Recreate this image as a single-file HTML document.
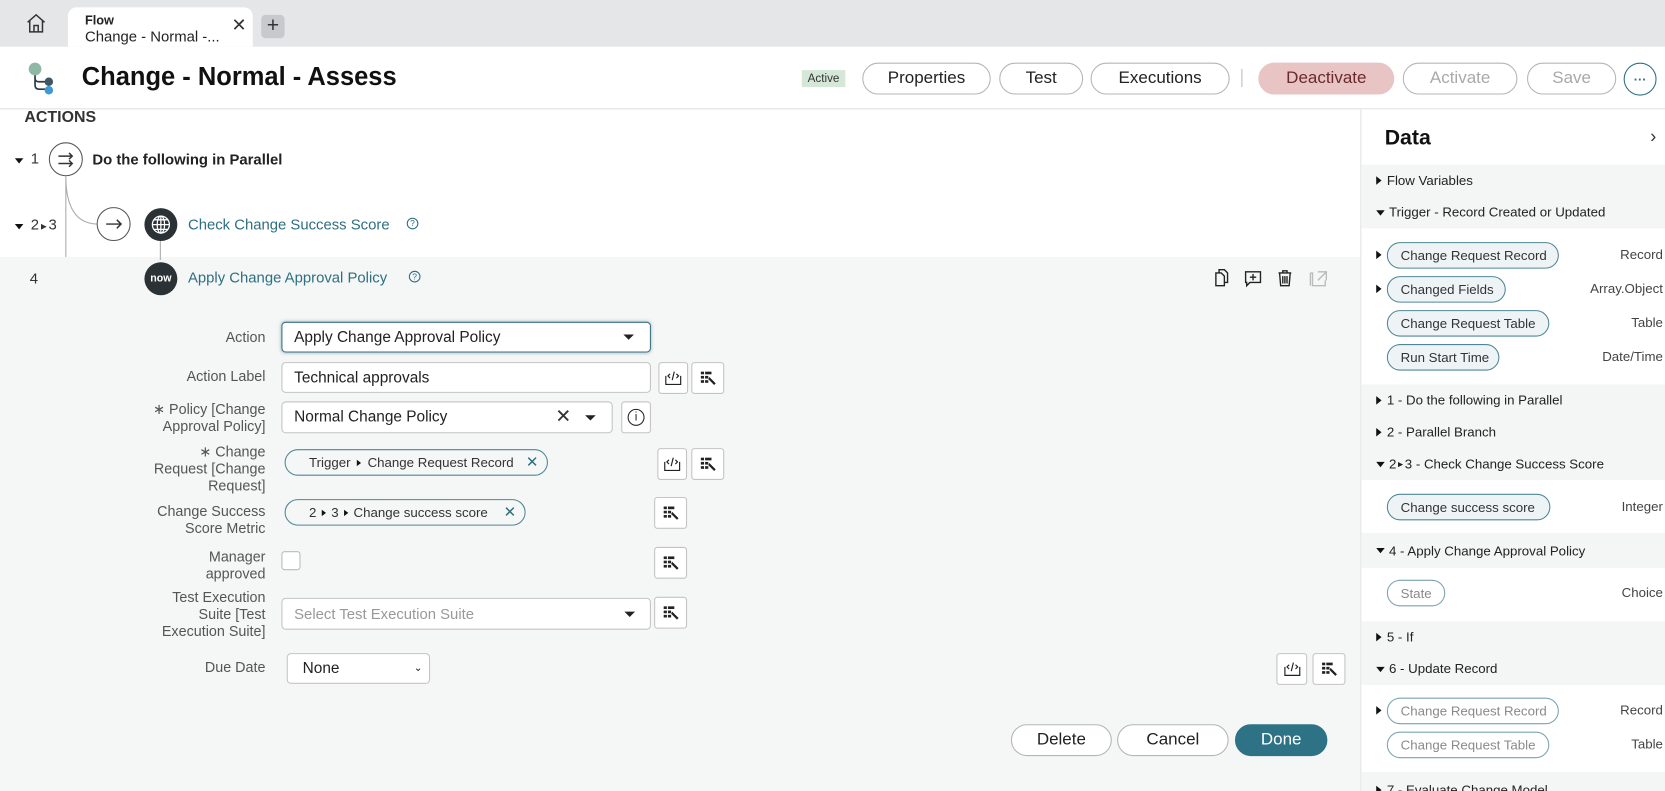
<!DOCTYPE html>
<html><head><meta charset="utf-8">
<style>
*{box-sizing:border-box;margin:0;padding:0}
html,body{width:1665px;height:791px;overflow:hidden;background:#fff;font-family:"Liberation Sans",sans-serif;color:#222}
#w{position:absolute;left:0;top:0;width:1568px;height:745px;transform:scale(1.0619);transform-origin:0 0;overflow:hidden}
.a{position:absolute}
.btn{position:absolute;border:1px solid #b5b5b5;border-radius:16px;background:#fff;font-size:16px;color:#222;display:flex;align-items:center;justify-content:center}
.lbl{position:absolute;right:1318px;text-align:right;font-size:13.5px;color:#555;line-height:16px}
.inp{position:absolute;background:#fff;border:1px solid #c4c4c4;border-radius:4px;font-size:14.5px;color:#222;display:flex;align-items:center;padding-left:11px}
.sq{position:absolute;width:31px;height:30px;background:#fff;border:1px solid #c4c4c4;border-radius:3px;display:flex;align-items:center;justify-content:center}
.pill{position:absolute;border:1px solid #4f8796;border-radius:13px;background:#eef4f6;font-size:12.5px;color:#333;display:flex;align-items:center;padding-left:12px;height:25px}
.pill.l{background:#fff;color:#8a8a8a;border-color:#7aa3ae}
.typ{position:absolute;right:2px;font-size:12.5px;color:#444}
.sh{position:absolute;left:0;width:287px;height:30px;background:#f4f5f5;font-size:12.5px;color:#222;display:flex;align-items:center;padding-left:14px}
.tri{display:inline-block;width:0;height:0;border-top:4px solid transparent;border-bottom:4px solid transparent;border-left:5px solid #111;margin-right:5px}
.trd{display:inline-block;width:0;height:0;border-left:4px solid transparent;border-right:4px solid transparent;border-top:5px solid #111;margin-right:4px}
.caret{position:absolute;width:0;height:0;border-left:5px solid transparent;border-right:5px solid transparent;border-top:5px solid #222}
</style></head><body><div id="w">

<!-- tab bar -->
<div class="a" style="left:0;top:0;width:1568px;height:44px;background:#e5e6e8"></div>
<svg class="a" style="left:24px;top:12px" width="20" height="20" viewBox="0 0 20 20" fill="none" stroke="#333" stroke-width="1.4"><path d="M2 9 L10 2 L18 9 M4 7.5 V18 H16 V7.5 M8 18 V12 H12 V18"/></svg>
<div class="a" style="left:64px;top:7px;width:174px;height:37px;background:#fff;border-radius:8px 8px 0 0"></div>
<div class="a" style="left:80px;top:12px;font-size:12px;font-weight:bold">Flow</div>
<div class="a" style="left:80px;top:26px;font-size:14px">Change - Normal -...</div>
<div class="a" style="left:218px;top:14px;font-size:17px;color:#333">✕</div>
<div class="a" style="left:246px;top:14px;width:22px;height:22px;background:#c7cacd;border-radius:4px;font-size:20px;line-height:21px;text-align:center;color:#333">+</div>

<!-- header -->
<div class="a" style="left:0;top:102px;width:1568px;height:1px;background:#e0e0e0"></div>
<svg class="a" style="left:25px;top:58px" width="28" height="32" viewBox="0 0 28 32"><path d="M8 8 V22 Q8 26 12 26 H20 M8 16 Q8 19 12 19 H20" fill="none" stroke="#2c3a44" stroke-width="1.6"/><circle cx="8" cy="7" r="6" fill="#8fb8a4"/><circle cx="21" cy="19" r="4" fill="#3f5663"/><circle cx="21" cy="27" r="4" fill="#3c9ad8"/></svg>
<div class="a" style="left:77px;top:59px;font-size:24px;font-weight:bold;color:#111">Change - Normal - Assess</div>
<div class="a" style="left:755px;top:66px;width:41px;height:16px;background:#d5e8d7;font-size:11px;color:#333;text-align:center;line-height:16px">Active</div>
<div class="btn" style="left:812px;top:59px;width:121px;height:30px">Properties</div>
<div class="btn" style="left:941px;top:59px;width:79px;height:30px">Test</div>
<div class="btn" style="left:1027px;top:59px;width:131px;height:30px">Executions</div>
<div class="a" style="left:1169px;top:65px;width:1px;height:17px;background:#bbb"></div>
<div class="btn" style="left:1185px;top:59px;width:128px;height:30px;background:#e8c4c5;border-color:#e8c4c5;color:#6a2a2a">Deactivate</div>
<div class="btn" style="left:1321px;top:59px;width:108px;height:30px;color:#a9a9a9">Activate</div>
<div class="btn" style="left:1438px;top:59px;width:84px;height:30px;color:#a9a9a9">Save</div>
<div class="btn" style="left:1529px;top:59px;width:31px;height:31px;border-color:#2e6f80;color:#2e6f80;font-size:12px;font-weight:bold">···</div>

<!-- actions -->
<div class="a" style="left:23px;top:102px;font-size:15px;font-weight:bold;color:#333">ACTIONS</div>
<div class="a" style="left:0;top:242px;width:1281px;height:503px;background:#f5f6f6"></div>
<div class="a" style="left:14px;top:141px;font-size:14px;color:#333"><span class="trd" style="margin-right:7px"></span>1</div>
<svg class="a" style="left:0;top:120px" width="200" height="125" fill="none" stroke="#aaa" stroke-width="1"><path d="M62 46 V122 M62 46 Q62 90 91 91"/><path d="M151 106 V125"/></svg>
<div class="a" style="left:46px;top:134px;width:32px;height:32px;border:1px solid #555;border-radius:50%;background:#fff"></div>
<svg class="a" style="left:52px;top:140px" width="20" height="20" fill="none" stroke="#333" stroke-width="1.4"><path d="M3 7 H16 M13 4 L16 7 L13 10 M3 14 H16 M13 11 L16 14 L13 17"/></svg>
<div class="a" style="left:87px;top:142px;font-size:14px;font-weight:bold;color:#222">Do the following in Parallel</div>

<div class="a" style="left:14px;top:203px;font-size:14px;color:#333"><span class="trd" style="margin-right:7px"></span>2<span style="font-size:9px">►</span>3</div>
<div class="a" style="left:91px;top:195px;width:32px;height:32px;border:1px solid #555;border-radius:50%;background:#fff"></div>
<svg class="a" style="left:97px;top:201px" width="20" height="20" fill="none" stroke="#333" stroke-width="1.4"><path d="M3 10 H17 M13 6 L17 10 L13 14"/></svg>
<div class="a" style="left:136px;top:196px;width:31px;height:31px;border-radius:50%;background:#2a3235"></div>
<svg class="a" style="left:142px;top:202px" width="19" height="19" fill="none" stroke="#fff" stroke-width="1.2"><circle cx="9.5" cy="9.5" r="8"/><ellipse cx="9.5" cy="9.5" rx="3.5" ry="8"/><path d="M1.5 9.5 H17.5 M3 5 H16 M3 14 H16 M9.5 1.5 V17.5"/></svg>
<div class="a" style="left:177px;top:203px;font-size:14px;color:#2e6f80">Check Change Success Score</div>
<div class="a" style="left:383px;top:205px;width:11px;height:11px;border:1px solid #2e6f80;border-radius:50%;font-size:8px;color:#2e6f80;text-align:center;line-height:10px">?</div>

<div class="a" style="left:28px;top:254px;font-size:14px;color:#333">4</div>
<div class="a" style="left:136px;top:247px;width:31px;height:31px;border-radius:50%;background:#2a3235;color:#fff;font-size:10px;font-weight:bold;text-align:center;line-height:31px">now</div>
<div class="a" style="left:177px;top:253px;font-size:14px;color:#2e6f80">Apply Change Approval Policy</div>
<div class="a" style="left:385px;top:255px;width:11px;height:11px;border:1px solid #2e6f80;border-radius:50%;font-size:8px;color:#2e6f80;text-align:center;line-height:10px">?</div>
<svg class="a" style="left:1141px;top:252px" width="110" height="20" fill="none" stroke="#222" stroke-width="1.3"><path d="M4 5 H9 L12 8 V17 H4 Z M7 5 V2 H12 L15 5 V14 H12"/><path d="M32 4 H46 V14 H36 L33 17 V14 H32 Z M39 6 V12 M36 9 H42"/><path d="M63 5 H75 M67 5 V3 H71 V5 M64 5 L65 17 H73 L74 5 M67 8 V15 M69 8 V15 M71 8 V15"/><path stroke="#bbb" d="M93 5 H95 V17 H107 V12 M93 5 V17 M100 4 H108 V12 M108 4 L100 12"/></svg>

<!-- form -->
<div class="lbl" style="top:310px">Action</div>
<div class="inp" style="left:265px;top:303px;width:348px;height:29px;border-color:#3c7384;box-shadow:0 0 3px rgba(60,115,132,.5)">Apply Change Approval Policy</div>
<div class="caret" style="left:587px;top:315px"></div>

<div class="lbl" style="top:347px">Action Label</div>
<div class="inp" style="left:265px;top:341px;width:348px;height:29px">Technical approvals</div>
<div class="sq" style="left:620px;top:341px;width:28px;height:30px"><svg width="18" height="16" fill="none" stroke="#222" stroke-width="1.1"><path d="M2 6 V14 H16 V6 M6 8 L4 6 L6 4 M12 8 L14 6 L12 4 M10 2 L8 10"/></svg></div>
<div class="sq" style="left:651px;top:341px"><svg width="18" height="16" fill="#222"><rect x="2" y="2" width="3" height="2.5"/><rect x="6" y="2" width="6" height="2.5"/><rect x="2" y="6" width="3" height="2.5"/><rect x="6" y="6" width="3" height="2.5"/><rect x="2" y="10" width="3" height="2.5"/><rect x="6" y="10" width="3" height="2.5"/><path d="M10 7 L16 13 L14.5 14.5 L9 9 Z"/></svg></div>

<div class="lbl" style="top:378px">∗ Policy [Change<br>Approval Policy]</div>
<div class="inp" style="left:265px;top:378px;width:312px;height:30px">Normal Change Policy</div>
<div class="a" style="left:523px;top:382px;font-size:18px;color:#333">✕</div>
<div class="caret" style="left:551px;top:391px"></div>
<div class="sq" style="left:585px;top:378px;width:28px;height:30px"><div style="width:16px;height:16px;border:1.3px solid #222;border-radius:50%;font-size:11px;text-align:center;line-height:14px">i</div></div>

<div class="lbl" style="top:418px">∗ Change<br>Request [Change<br>Request]</div>
<div class="pill" style="left:268px;top:423px;width:248px;padding-left:22px;background:#f5f6f6">Trigger <span class="tri" style="margin:0 6px;border-top-width:3px;border-bottom-width:3px;border-left-width:4px"></span>Change Request Record<span style="position:absolute;right:8px;color:#2e6f80;font-size:14px">✕</span></div>
<div class="sq" style="left:619px;top:422px;width:28px;height:30px"><svg width="18" height="16" fill="none" stroke="#222" stroke-width="1.1"><path d="M2 6 V14 H16 V6 M6 8 L4 6 L6 4 M12 8 L14 6 L12 4 M10 2 L8 10"/></svg></div>
<div class="sq" style="left:651px;top:422px"><svg width="18" height="16" fill="#222"><rect x="2" y="2" width="3" height="2.5"/><rect x="6" y="2" width="6" height="2.5"/><rect x="2" y="6" width="3" height="2.5"/><rect x="6" y="6" width="3" height="2.5"/><rect x="2" y="10" width="3" height="2.5"/><rect x="6" y="10" width="3" height="2.5"/><path d="M10 7 L16 13 L14.5 14.5 L9 9 Z"/></svg></div>

<div class="lbl" style="top:474px">Change Success<br>Score Metric</div>
<div class="pill" style="left:268px;top:470px;width:227px;padding-left:22px;background:#f5f6f6">2 <span class="tri" style="margin:0 5px;border-top-width:3px;border-bottom-width:3px;border-left-width:4px"></span>3 <span class="tri" style="margin:0 5px;border-top-width:3px;border-bottom-width:3px;border-left-width:4px"></span>Change success score<span style="position:absolute;right:8px;color:#2e6f80;font-size:14px">✕</span></div>
<div class="sq" style="left:616px;top:468px"><svg width="18" height="16" fill="#222"><rect x="2" y="2" width="3" height="2.5"/><rect x="6" y="2" width="6" height="2.5"/><rect x="2" y="6" width="3" height="2.5"/><rect x="6" y="6" width="3" height="2.5"/><rect x="2" y="10" width="3" height="2.5"/><rect x="6" y="10" width="3" height="2.5"/><path d="M10 7 L16 13 L14.5 14.5 L9 9 Z"/></svg></div>

<div class="lbl" style="top:517px">Manager<br>approved</div>
<div class="a" style="left:265px;top:519px;width:18px;height:18px;background:#fff;border:1px solid #bbb;border-radius:3px"></div>
<div class="sq" style="left:616px;top:515px"><svg width="18" height="16" fill="#222"><rect x="2" y="2" width="3" height="2.5"/><rect x="6" y="2" width="6" height="2.5"/><rect x="2" y="6" width="3" height="2.5"/><rect x="6" y="6" width="3" height="2.5"/><rect x="2" y="10" width="3" height="2.5"/><rect x="6" y="10" width="3" height="2.5"/><path d="M10 7 L16 13 L14.5 14.5 L9 9 Z"/></svg></div>

<div class="lbl" style="top:555px">Test Execution<br>Suite [Test<br>Execution Suite]</div>
<div class="inp" style="left:265px;top:563px;width:348px;height:30px;color:#999;font-size:14px">Select Test Execution Suite</div>
<div class="caret" style="left:588px;top:576px"></div>
<div class="sq" style="left:616px;top:562px"><svg width="18" height="16" fill="#222"><rect x="2" y="2" width="3" height="2.5"/><rect x="6" y="2" width="6" height="2.5"/><rect x="2" y="6" width="3" height="2.5"/><rect x="6" y="6" width="3" height="2.5"/><rect x="2" y="10" width="3" height="2.5"/><rect x="6" y="10" width="3" height="2.5"/><path d="M10 7 L16 13 L14.5 14.5 L9 9 Z"/></svg></div>

<div class="lbl" style="top:621px">Due Date</div>
<div class="inp" style="left:270px;top:615px;width:135px;height:29px;padding-left:14px">None<span style="position:absolute;right:6px;font-size:10px">&#8964;</span></div>
<div class="sq" style="left:1202px;top:615px;width:29px;height:30px"><svg width="18" height="16" fill="none" stroke="#222" stroke-width="1.1"><path d="M2 6 V14 H16 V6 M6 8 L4 6 L6 4 M12 8 L14 6 L12 4 M10 2 L8 10"/></svg></div>
<div class="sq" style="left:1236px;top:615px"><svg width="18" height="16" fill="#222"><rect x="2" y="2" width="3" height="2.5"/><rect x="6" y="2" width="6" height="2.5"/><rect x="2" y="6" width="3" height="2.5"/><rect x="6" y="6" width="3" height="2.5"/><rect x="2" y="10" width="3" height="2.5"/><rect x="6" y="10" width="3" height="2.5"/><path d="M10 7 L16 13 L14.5 14.5 L9 9 Z"/></svg></div>

<div class="btn" style="left:952px;top:682px;width:95px;height:30px">Delete</div>
<div class="btn" style="left:1052px;top:682px;width:105px;height:30px">Cancel</div>
<div class="btn" style="left:1163px;top:682px;width:87px;height:30px;background:#2e7286;border-color:#2e7286;color:#fff">Done</div>

<!-- right panel -->
<div class="a" style="left:1281px;top:103px;width:287px;height:642px;background:#fff;border-left:1px solid #e3e3e3">
  <div class="a" style="left:22px;top:16px;font-size:20px;font-weight:bold;color:#111">Data</div>
  <div class="a" style="left:272px;top:16px;font-size:17px;color:#333">›</div>
  <div class="sh" style="top:52px"><span class="tri"></span>Flow Variables</div>
  <div class="sh" style="top:82px"><span class="trd"></span>Trigger - Record Created or Updated</div>
  <span class="tri a" style="left:14px;top:133px"></span>
  <div class="pill" style="left:24px;top:125px;width:162px">Change Request Record</div><div class="typ" style="top:130px">Record</div>
  <span class="tri a" style="left:14px;top:165px"></span>
  <div class="pill" style="left:24px;top:157px;width:112px">Changed Fields</div><div class="typ" style="top:162px">Array.Object</div>
  <div class="pill" style="left:24px;top:189px;width:153px">Change Request Table</div><div class="typ" style="top:194px">Table</div>
  <div class="pill" style="left:24px;top:221px;width:106px">Run Start Time</div><div class="typ" style="top:226px">Date/Time</div>
  <div class="sh" style="top:259px"><span class="tri"></span>1 - Do the following in Parallel</div>
  <div class="sh" style="top:289px"><span class="tri"></span>2 - Parallel Branch</div>
  <div class="sh" style="top:319px"><span class="trd"></span>2<span style="font-size:8px">►</span>3 - Check Change Success Score</div>
  <div class="pill" style="left:24px;top:362px;width:154px">Change success score</div><div class="typ" style="top:367px">Integer</div>
  <div class="sh" style="top:399px;height:33px"><span class="trd"></span>4 - Apply Change Approval Policy</div>
  <div class="pill l" style="left:24px;top:443px;width:55px">State</div><div class="typ" style="top:448px">Choice</div>
  <div class="sh" style="top:482px"><span class="tri"></span>5 - If</div>
  <div class="sh" style="top:512px;height:30px"><span class="trd"></span>6 - Update Record</div>
  <span class="tri a" style="left:14px;top:562px"></span>
  <div class="pill l" style="left:24px;top:554px;width:162px">Change Request Record</div><div class="typ" style="top:559px">Record</div>
  <div class="pill l" style="left:24px;top:586px;width:153px">Change Request Table</div><div class="typ" style="top:591px">Table</div>
  <div class="sh" style="top:624px;height:30px;align-items:flex-start;padding-top:10px"><span class="tri" style="margin-top:3px"></span>7 - Evaluate Change Model</div>
</div>
</div></body></html>
